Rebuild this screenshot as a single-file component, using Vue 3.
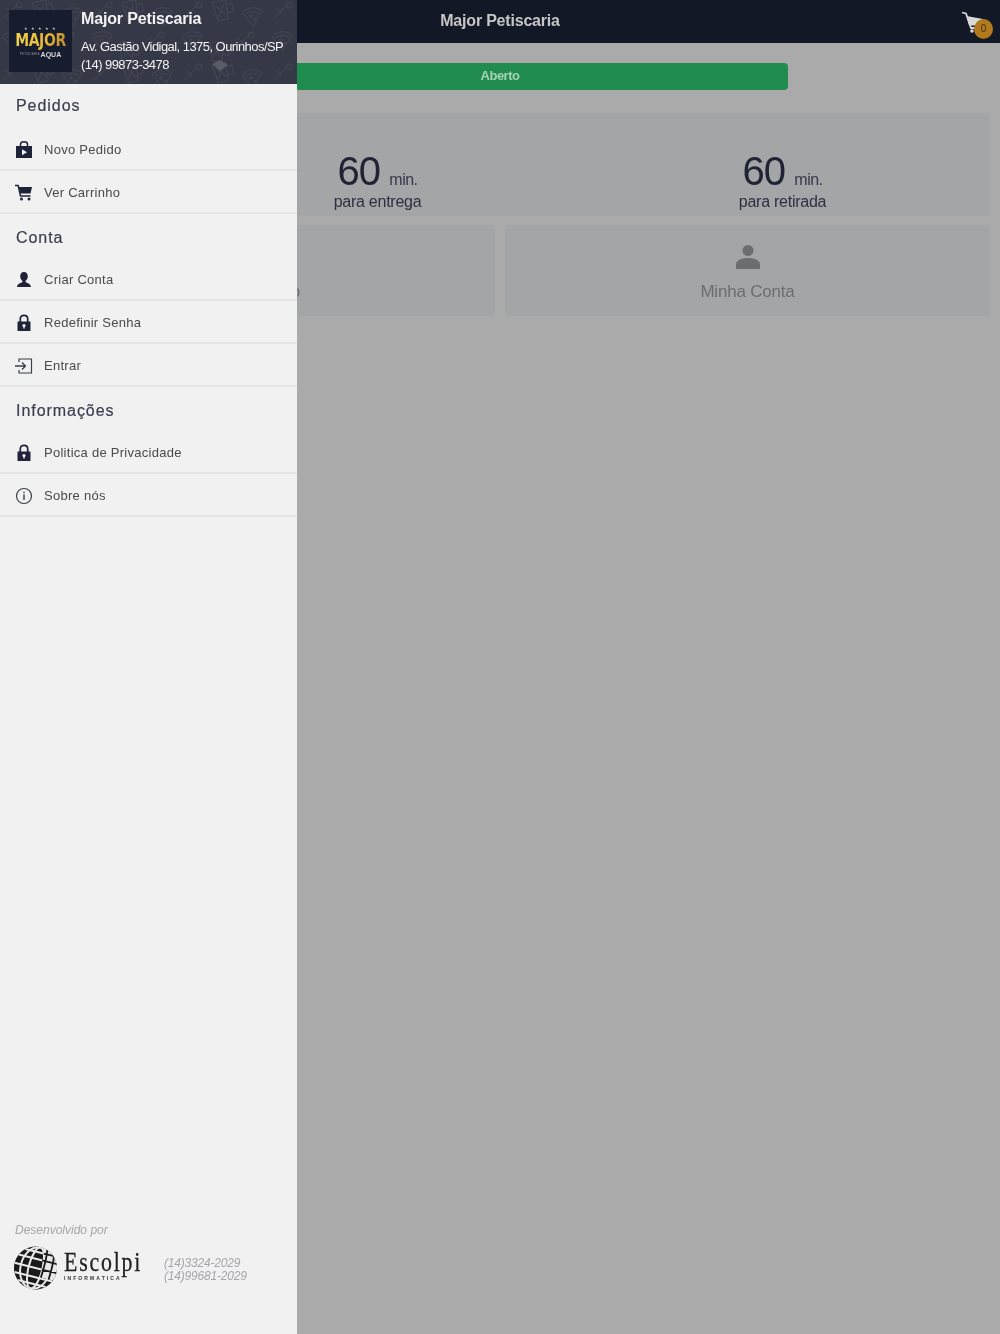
<template>
  <div class="page">
    <header class="topbar">
      <span class="topbar-title">Major Petiscaria</span>
      <div class="cart">
        <svg width="26" height="26" viewBox="0 0 26 26">
          <path d="M1 2.500 5 3.500 10 18H21" fill="none" stroke="#d9d9d9" stroke-width="1.800" />
          <path d="M5.500 6 22 9 20 15.500H8Z" fill="#d9d9d9" />
          <circle cx="11" cy="21" r="1.800" fill="#d9d9d9" />
          <circle cx="19" cy="21" r="1.800" fill="#d9d9d9" />
        </svg>
        <span class="badge">0</span>
      </div>
    </header>

    <div class="status-wrap">
      <div class="status">Aberto</div>
    </div>

    <section class="times">
      <div v-for="t in times" :key="t" class="time">
        <div class="time-value"><span class="time-num">60</span><span class="time-unit">min.</span></div>
        <div class="time-label">{{ t }}</div>
      </div>
    </section>

    <section class="shortcuts">
      <div class="shortcut">
        <span class="shortcut-spacer"></span>
        <span class="shortcut-label">Novo Pedido</span>
      </div>
      <div class="shortcut">
        <svg width="26" height="26" viewBox="0 0 26 26" fill="#6c6d70">
          <circle cx="13" cy="6.500" r="5.500" />
          <path d="M1 25v-4.500C1 16 7 14 13 14s12 2 12 6.500V25Z" />
        </svg>
        <span class="shortcut-label">Minha Conta</span>
      </div>
    </section>

    <aside class="drawer">
      <div class="store">
        <svg class="store-pattern" width="297" height="84">
          <defs>
            <g id="slice" fill="none" stroke="#434653" stroke-width="1">
              <path d="M0 7C4 1 14 0 20 5L11 20Z" />
              <path d="M3 8c5-3 10-3 14-.5" />
              <circle cx="9" cy="10" r="1.300" />
              <circle cx="13" cy="13" r="1" />
            </g>
            <g id="glass" fill="none" stroke="#434653" stroke-width="1">
              <path d="M0 0h14l-2 19H2Z" />
              <path d="M3 4l8 11M11 4 3 15" />
              <path d="M14 5h5v8h-6" />
            </g>
            <g id="stick" fill="none" stroke="#434653" stroke-width="1">
              <path d="M0 16 14 2" />
              <circle cx="15" cy="3" r="3" />
              <path d="M2 6l6 6" />
            </g>
            <pattern id="doodles" width="90" height="62" patternUnits="userSpaceOnUse">
              <use href="#slice" x="2" y="30" />
              <use href="#glass" x="32" y="3" transform="rotate(-14 32 3)" />
              <use href="#stick" x="56" y="32" />
              <use href="#slice" x="62" y="6" />
              <use href="#glass" x="30" y="42" />
              <use href="#stick" x="4" y="2" />
            </pattern>
          </defs>
          <rect width="297" height="84" fill="url(#doodles)" />
          <path d="M148 173l8-4 8 5-8 6Z" transform="translate(64 -109)" fill="#5a5c68" />
        </svg>
        <div class="store-logo">
          <span class="logo-stars">★ ★ ★ ★ ★</span>
          <span class="logo-name">MAJOR</span>
          <span class="logo-bottom">
            <span class="logo-kind">PETISCARIA</span>
            <span class="logo-sub">AQUA</span>
          </span>
        </div>
        <div class="store-info">
          <div class="store-name">Major Petiscaria</div>
          <div class="store-line address">Av. Gastão Vidigal, 1375, Ourinhos/SP</div>
          <div class="store-line">(14) 99873-3478</div>
        </div>
      </div>

      <nav class="menu">
        <template v-for="group in menu" :key="group.title">
          <h3 class="menu-title">{{ group.title }}</h3>
          <a v-for="item in group.items" :key="item.label" class="menu-item">
            <svg class="menu-icon" width="18" height="18" viewBox="0 0 18 18">
              <template v-if="item.icon === 'bag'">
                <path d="M1 5h16v12H1Z" fill="#1e2338" />
                <path d="M5.500 6V3.500C5.500 1.500 7 .8 9 .8s3.500.7 3.500 2.700V6" fill="none" stroke="#1e2338" stroke-width="1.500" />
                <path d="M7 8.200l5 3-5 3Z" fill="#f1f1f1" />
              </template>
              <template v-else-if="item.icon === 'cart'">
                <path d="M0 1.500h3.200L5.500 12h10" fill="none" stroke="#1e2338" stroke-width="1.500" />
                <path d="M3.800 3H17l-1.500 6.500H5.200Z" fill="#1e2338" />
                <circle cx="6.500" cy="15" r="1.500" fill="#1e2338" />
                <circle cx="14" cy="15" r="1.500" fill="#1e2338" />
              </template>
              <template v-else-if="item.icon === 'person'">
                <path d="M9 1c2.600 0 3.800 2 3.800 4.300 0 2-1 3.700-2.200 4.700v1.300c2 .8 5 1.500 5.400 4.700H2c.4-3.200 3.400-3.900 5.400-4.700V10C6.200 9 5.200 7.300 5.200 5.300 5.200 3 6.400 1 9 1Z" fill="#1e2338" />
              </template>
              <template v-else-if="item.icon === 'lock'">
                <path d="M2.500 7.500h13V17h-13Z" fill="#1e2338" />
                <path d="M5.300 8V4.800C5.300 2.500 7 1.300 9 1.300s3.700 1.200 3.700 3.500V8" fill="none" stroke="#1e2338" stroke-width="1.700" />
                <circle cx="9" cy="11.500" r="1.600" fill="#f1f1f1" />
                <path d="M8.300 12h1.400v2.500H8.300Z" fill="#f1f1f1" />
              </template>
              <template v-else-if="item.icon === 'login'">
                <path d="M4 5V2h12.500v14H4v-3" fill="none" stroke="#3a3e50" stroke-width="1.200" />
                <path d="M0 9h10M7 5.500 10.500 9 7 12.500" fill="none" stroke="#3a3e50" stroke-width="1.300" />
              </template>
              <template v-else>
                <circle cx="9" cy="9" r="7.500" fill="none" stroke="#3a3e50" stroke-width="1.200" />
                <path d="M8.300 7.500h1.400v5.500H8.300ZM8.300 4.700h1.400v1.500H8.300Z" fill="#3a3e50" />
              </template>
            </svg>
            <span>{{ item.label }}</span>
          </a>
        </template>
      </nav>

      <footer class="dev">
        <div class="dev-caption">Desenvolvido por</div>
        <div class="dev-row">
          <svg class="globe" width="43" height="44" viewBox="0 0 43 44">
            <defs>
              <clipPath id="globe-clip">
                <circle cx="21.500" cy="22" r="21.500" />
              </clipPath>
            </defs>
            <g transform="rotate(14 21.500 22)" clip-path="url(#globe-clip)">
              <rect x="-5" y="-5" width="53" height="54" fill="#1a1a1a" />
              <path d="M24 -2h24v32H30Z" fill="#e8e8e8" />
              <g fill="none" stroke="#e8e8e8" stroke-width="2">
                <ellipse cx="21.500" cy="22" rx="7" ry="21" />
                <ellipse cx="21.500" cy="22" rx="15" ry="21" />
                <path d="M0 22h43M2 13h39M2 31h39M7 6h29M7 38h29" />
              </g>
              <g fill="none" stroke="#1a1a1a" stroke-width="1.800">
                <path d="M28.500 1c1 6 1.500 14 .5 29M36.500 6c1 6 1 14 .5 24M26 6h14M26 13h16M28 22h15" />
              </g>
            </g>
          </svg>
          <div class="brand">
            <div class="brand-name">Escolpi</div>
            <div class="brand-sub">INFORMATICA</div>
          </div>
          <div class="dev-phones">
            <div>(14)3324-2029</div>
            <div>(14)99681-2029</div>
          </div>
        </div>
      </footer>
    </aside>
  </div>
</template>

<script setup>
const times = ['para entrega', 'para retirada']

const menu = [
  {
    title: 'Pedidos',
    items: [
      { label: 'Novo Pedido', icon: 'bag' },
      { label: 'Ver Carrinho', icon: 'cart' },
    ],
  },
  {
    title: 'Conta',
    items: [
      { label: 'Criar Conta', icon: 'person' },
      { label: 'Redefinir Senha', icon: 'lock' },
      { label: 'Entrar', icon: 'login' },
    ],
  },
  {
    title: 'Informações',
    items: [
      { label: 'Politica de Privacidade', icon: 'lock' },
      { label: 'Sobre nós', icon: 'info' },
    ],
  },
]
</script>

<style>
body {
  margin: 0;
  background: #aaaaaa;
}
</style>

<style scoped>
.page {
  position: relative;
  width: 1000px;
  height: 1334px;
  overflow: hidden;
  background: #aaaaaa;
  font-family: "Liberation Sans", Arial, sans-serif;
  filter: blur(0.4px);
}

.topbar {
  display: flex;
  align-items: center;
  justify-content: center;
  position: relative;
  height: 43px;
  background: #131826;
}
.topbar-title {
  margin-top: -2px;
  color: #c6c6c6;
  font-size: 16px;
  font-weight: bold;
  letter-spacing: -0.2px;
}
.cart {
  position: absolute;
  top: 10px;
  right: 7px;
  width: 32px;
  height: 30px;
}
.badge {
  position: absolute;
  top: 9px;
  left: 13px;
  width: 19px;
  height: 20px;
  border-radius: 50%;
  background: #b27a1c;
  color: #3b3018;
  font-size: 10px;
  line-height: 20px;
  text-align: center;
}

.status-wrap {
  display: flex;
  justify-content: center;
  padding: 20px 0 23px;
}
.status {
  width: 576px;
  height: 27px;
  border-radius: 4px;
  background: #208c4e;
  color: #a6d0b7;
  font-size: 13px;
  font-weight: bold;
  line-height: 26px;
  letter-spacing: -0.5px;
  text-align: center;
}

.times {
  display: grid;
  grid-template-columns: 405px 405px;
  height: 103px;
  margin: 0 10px;
  padding-left: 165px;
  background: #a4a5a7;
}
.time {
  padding-top: 35px;
  text-align: center;
  color: #1f2333;
}
.time-value {
  height: 43px;
  line-height: 46px;
}
.time-num {
  font-size: 40px;
  letter-spacing: -0.8px;
}
.time-unit {
  margin-left: 9px;
  color: #35384a;
  font-size: 16px;
  letter-spacing: -0.5px;
}
.time-label {
  margin-top: 2px;
  color: #2d3040;
  font-size: 16px;
  letter-spacing: -0.25px;
}

.shortcuts {
  display: grid;
  grid-template-columns: 485px 485px;
  gap: 10px;
  margin: 9px 10px 0;
}
.shortcut {
  display: flex;
  flex-direction: column;
  align-items: center;
  height: 91px;
  padding-top: 19px;
  box-sizing: border-box;
  background: #a4a5a7;
}
.shortcut-spacer {
  height: 26px;
}
.shortcut-label {
  margin-top: 12px;
  color: #6c6d70;
  font-size: 17px;
  letter-spacing: -0.2px;
}

.drawer {
  position: absolute;
  top: 0;
  left: 0;
  display: flex;
  flex-direction: column;
  width: 297px;
  height: 1334px;
  background: #f1f1f1;
}

.store {
  display: flex;
  position: relative;
  height: 84px;
  padding: 10px 0 0 9px;
  box-sizing: border-box;
  background: #353846;
  overflow: hidden;
}
.store-pattern {
  position: absolute;
  top: 0;
  left: 0;
}
.store-logo {
  display: flex;
  flex-direction: column;
  align-items: center;
  position: relative;
  width: 63px;
  height: 62px;
  padding-top: 16px;
  box-sizing: border-box;
  background: #171c2e;
}
.logo-stars {
  color: #c8c8c8;
  font-size: 4px;
  line-height: 6px;
  letter-spacing: 1px;
}
.logo-name {
  background: linear-gradient(100deg, #f2d64a 0%, #e8b93a 60%, #b98a2c 100%);
  -webkit-background-clip: text;
  background-clip: text;
  color: transparent;
  font-family: "DejaVu Sans", sans-serif;
  font-size: 14px;
  font-weight: bold;
  line-height: 17px;
  letter-spacing: -0.4px;
  transform: scaleY(1.3);
}
.logo-bottom {
  display: flex;
  align-items: center;
  gap: 1px;
  margin-top: 1px;
  height: 8px;
}
.logo-kind {
  color: #8f8f8f;
  font-size: 3px;
  letter-spacing: 0.2px;
}
.logo-sub {
  color: #d8d8d8;
  font-size: 7px;
  font-weight: bold;
}
.store-info {
  position: relative;
  margin-left: 9px;
  color: #f3f3f3;
}
.store-name {
  height: 21px;
  font-size: 16px;
  font-weight: bold;
  line-height: 18px;
  letter-spacing: -0.15px;
}
.store-line {
  font-size: 13px;
  line-height: 18px;
  letter-spacing: -0.55px;
}
.address {
  margin-top: 7px;
}

.menu {
  display: flex;
  flex-direction: column;
}
.menu-title {
  display: flex;
  align-items: center;
  height: 44px;
  margin: 0;
  padding: 4px 0 0 16px;
  box-sizing: border-box;
  color: #3a3e50;
  font-size: 16px;
  font-weight: normal;
  letter-spacing: 0.95px;
  -webkit-text-stroke: 0.2px #3a3e50;
}
.menu-title:first-child {
  padding-top: 0;
}
.menu-item {
  display: flex;
  align-items: center;
  height: 43px;
  padding: 2px 0 0 15px;
  box-sizing: border-box;
  border-bottom: 2px solid #e4e4e4;
  color: #4a4a4a;
  font-size: 13px;
  letter-spacing: 0.27px;
}
.menu-icon {
  flex: none;
  margin-right: 11px;
}

.dev {
  margin-top: auto;
  padding: 0 0 44px 15px;
}
.dev-caption {
  color: #a6a6ab;
  font-size: 12px;
  font-style: italic;
}
.dev-row {
  display: flex;
  align-items: flex-start;
  margin-top: 9px;
  margin-left: -1px;
}
.globe {
  flex: none;
}
.brand {
  margin: 4px 0 0 7px;
  width: 100px;
}
.brand-name {
  color: #222222;
  font-family: "Liberation Serif", "Times New Roman", serif;
  font-size: 28px;
  line-height: 24px;
  letter-spacing: 2.3px;
  white-space: nowrap;
  transform: scaleX(0.78);
  transform-origin: left;
  -webkit-text-stroke: 0.3px #222222;
}
.brand-sub {
  margin-top: 1px;
  color: #333333;
  font-size: 5px;
  font-weight: bold;
  line-height: 6px;
  letter-spacing: 2.1px;
  white-space: nowrap;
}
.dev-phones {
  margin-top: 11px;
  color: #a6a6ab;
  font-size: 12px;
  font-style: italic;
  line-height: 13px;
  letter-spacing: -0.2px;
}
</style>
